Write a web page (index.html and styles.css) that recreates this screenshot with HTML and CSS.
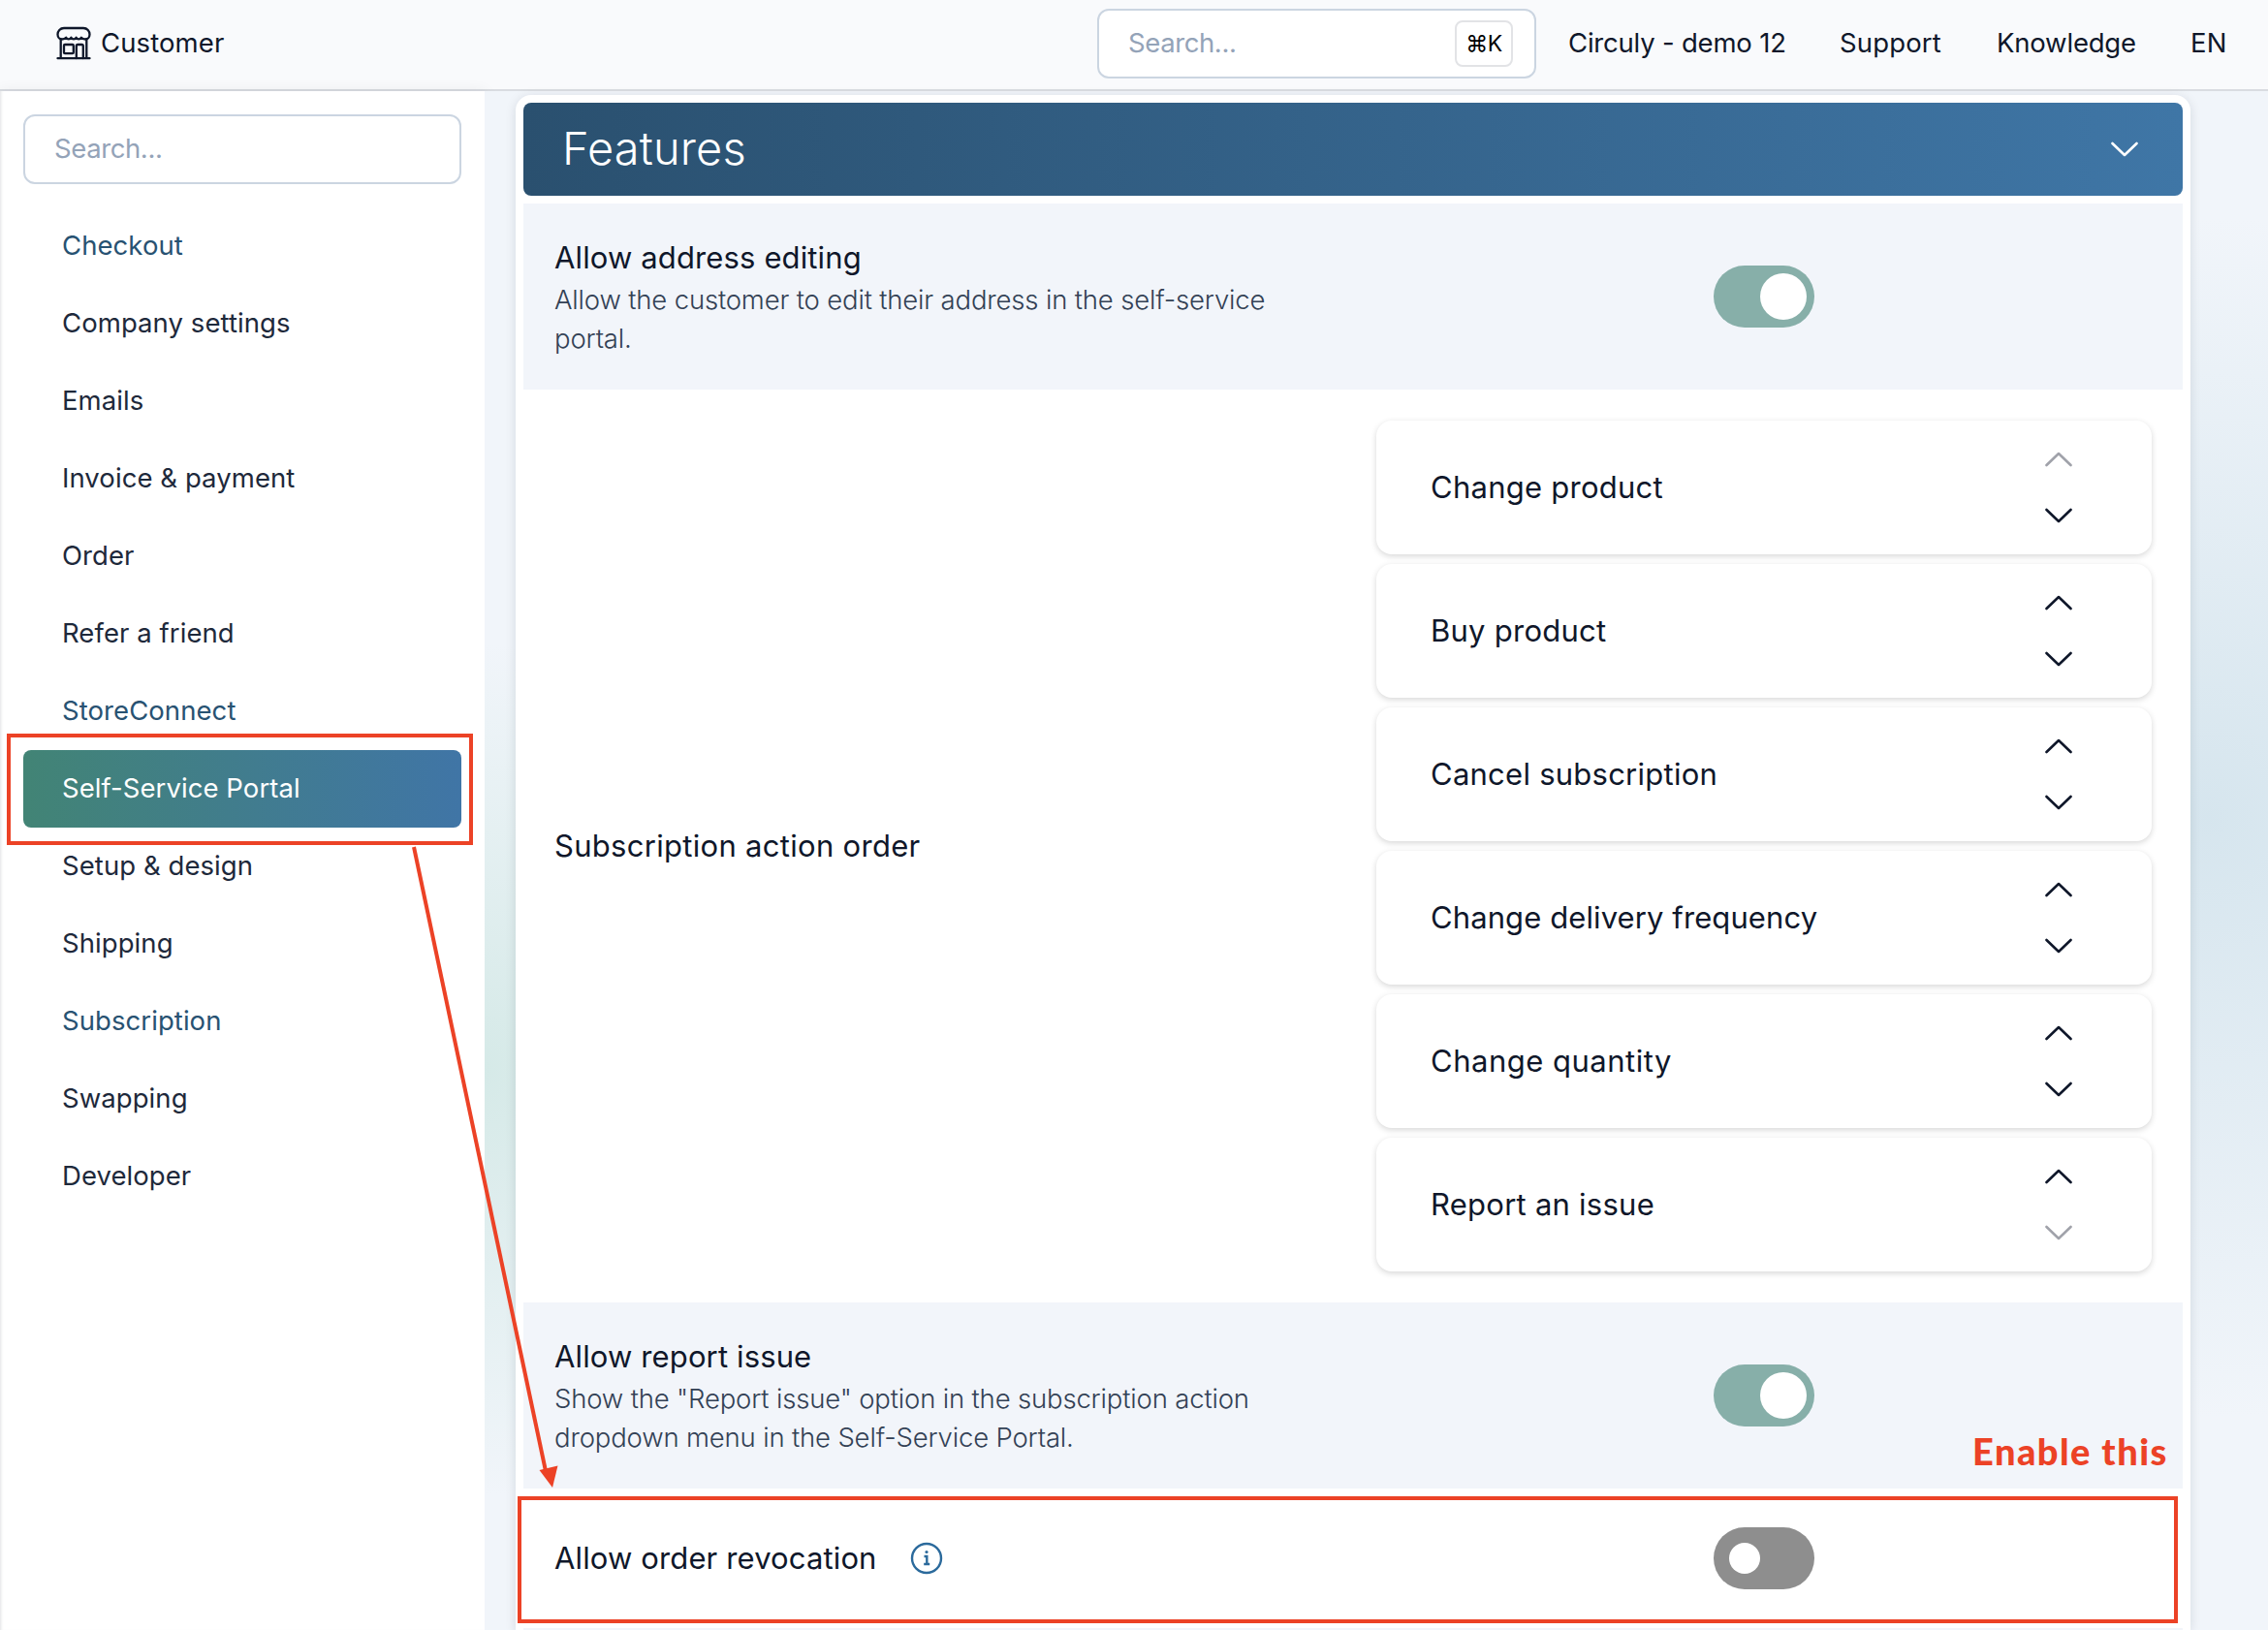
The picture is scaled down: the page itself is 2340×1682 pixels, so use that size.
FILE: index.html
```html
<!DOCTYPE html>
<html lang="en">
<head>
<meta charset="utf-8">
<title>Self-Service Portal settings</title>
<link rel="stylesheet" href="styles.css">
</head>
<body>
<header class="topbar">
  <a class="brand">
    <svg class="brand-icon" viewBox="0 0 36 36" fill="none" stroke="currentColor" stroke-width="2.3" stroke-linecap="round" stroke-linejoin="round">
      <path d="M8 2H28C32 2 34.500 5.200 34.500 8.500C34.500 11.500 32.300 13.500 30 13.500C28 13.500 26.800 13 25.800 11.800C24.800 14 21.600 14 20.600 11.800C19.600 14 16.400 14 15.400 11.800C14.400 14 11.200 14 10.200 11.800C9.200 13 8 13.500 6 13.500C3.700 13.500 1.500 11.500 1.500 8.500C1.500 5.200 4 2 8 2Z"/>
      <path d="M4.700 13.500V33M31.300 13.500V33M1.500 33.200H34.500"/>
      <rect x="8" y="19" width="9.800" height="9.200" rx="1"/>
      <path d="M20.800 33V20.500Q20.800 19 22.300 19H26.300Q27.800 19 27.800 20.500V33"/>
    </svg>
    <span class="lift">Customer</span>
  </a>
  <div class="top-search"><span class="placeholder lift">Search...</span><kbd class="shortcut">⌘K</kbd></div>
  <nav class="top-links lift">
    <a class="tight">Circuly - demo 12</a>
    <a>Support</a>
    <a class="tight">Knowledge</a>
    <a>EN</a>
  </nav>
</header>
<div class="layout">
  <aside class="sidebar">
    <div class="side-search"><span class="placeholder">Search...</span></div>
    <nav class="menu">
      <a class="item accent">Checkout</a>
      <a class="item">Company settings</a>
      <a class="item">Emails</a>
      <a class="item">Invoice &amp; payment</a>
      <a class="item">Order</a>
      <a class="item">Refer a friend</a>
      <a class="item accent">StoreConnect</a>
      <a class="item active">Self-Service Portal</a>
      <a class="item">Setup &amp; design</a>
      <a class="item">Shipping</a>
      <a class="item accent">Subscription</a>
      <a class="item">Swapping</a>
      <a class="item">Developer</a>
    </nav>
  </aside>
  <main class="content">
    <section class="panel">
      <div class="panel-head">
        <h2 class="panel-title">Features</h2>
        <svg class="chev head-chev" viewBox="0 0 28 16"><path d="M1.500 2L14 14L26.500 2"/></svg>
      </div>
      <div class="row shaded">
        <div class="copy">
          <h3 class="row-title">Allow address editing</h3>
          <p class="desc">Allow the customer to edit their address in the self-service<br>portal.</p>
        </div>
        <div class="control"><span class="toggle on"></span></div>
      </div>
      <div class="row">
        <div class="copy"><h3 class="row-title wide">Subscription action order</h3></div>
        <div class="control cards">
          <div class="card"><span class="card-name">Change product</span><span class="movers"><svg class="chev off" viewBox="0 0 28 16"><path d="M1.500 14L14 2L26.500 14"/></svg><svg class="chev" viewBox="0 0 28 16"><path d="M1.500 2L14 14L26.500 2"/></svg></span></div>
          <div class="card"><span class="card-name">Buy product</span><span class="movers"><svg class="chev" viewBox="0 0 28 16"><path d="M1.500 14L14 2L26.500 14"/></svg><svg class="chev" viewBox="0 0 28 16"><path d="M1.500 2L14 14L26.500 2"/></svg></span></div>
          <div class="card"><span class="card-name">Cancel subscription</span><span class="movers"><svg class="chev" viewBox="0 0 28 16"><path d="M1.500 14L14 2L26.500 14"/></svg><svg class="chev" viewBox="0 0 28 16"><path d="M1.500 2L14 14L26.500 2"/></svg></span></div>
          <div class="card"><span class="card-name snug">Change delivery frequency</span><span class="movers"><svg class="chev" viewBox="0 0 28 16"><path d="M1.500 14L14 2L26.500 14"/></svg><svg class="chev" viewBox="0 0 28 16"><path d="M1.500 2L14 14L26.500 2"/></svg></span></div>
          <div class="card"><span class="card-name wide">Change quantity</span><span class="movers"><svg class="chev" viewBox="0 0 28 16"><path d="M1.500 14L14 2L26.500 14"/></svg><svg class="chev" viewBox="0 0 28 16"><path d="M1.500 2L14 14L26.500 2"/></svg></span></div>
          <div class="card"><span class="card-name">Report an issue</span><span class="movers"><svg class="chev" viewBox="0 0 28 16"><path d="M1.500 14L14 2L26.500 14"/></svg><svg class="chev off" viewBox="0 0 28 16"><path d="M1.500 2L14 14L26.500 2"/></svg></span></div>
        </div>
      </div>
      <div class="row shaded">
        <div class="copy">
          <h3 class="row-title">Allow report issue</h3>
          <p class="desc">Show the "Report issue" option in the subscription action<br>dropdown menu in the Self-Service Portal.</p>
        </div>
        <div class="control"><span class="toggle on"></span></div>
      </div>
      <div class="row">
        <div class="copy with-info">
          <h3 class="row-title">Allow order revocation</h3>
          <svg class="info" viewBox="0 0 34 34" fill="none" stroke="#2b6a9c" stroke-width="2.400"><circle cx="17" cy="17" r="15"/><path d="M14.500 15H17.300V22.500M14.200 23H20.200"/><circle cx="17" cy="10.500" r="1.600" fill="#2b6a9c" stroke="none"/></svg>
        </div>
        <div class="control"><span class="toggle"></span></div>
      </div>
      <div class="next-row"></div>
    </section>
  </main>
</div>
<div class="note note-menu"></div>
<div class="note note-row"></div>
<svg class="arrow" viewBox="0 0 160 670"><path d="M7 4L143 648" stroke="#ec4226" stroke-width="4"/><path d="M136.500 647L155.500 642.500L150 665Z" fill="#ec4226"/></svg>
<span class="note-text">Enable this</span>
</body>
</html>
```
FILE: styles.css
```css
* { box-sizing: border-box; }
body {
  margin: 0;
  width: 2340px;
  height: 1682px;
  overflow: hidden;
  position: relative;
  font-family: Inter, "Liberation Sans", sans-serif;
  font-size: 27.5px;
  color: #0f172a;
  background: #f1f5fa;
}
h2, h3, p { margin: 0; font-weight: 400; }

.topbar {
  height: 94px;
  display: flex;
  align-items: center;
  padding: 0 45px 2px 58px;
  background: #f9fafc;
  border-bottom: 2px solid #d9dce1;
}
.brand { display: flex; align-items: center; gap: 10px; line-height: 40px; letter-spacing: .1px; }
.brand-icon { width: 36px; height: 36px; }
.lift { padding-bottom: 2px; }
.top-search {
  width: 453px;
  height: 72px;
  margin-left: auto;
  display: flex;
  align-items: center;
  justify-content: space-between;
  padding: 0 22px 0 30px;
  background: #fff;
  border: 2px solid #cbd5e1;
  border-radius: 12px;
}
.placeholder { color: #94a3b8; letter-spacing: -.4px; }
.shortcut {
  width: 60px;
  height: 48px;
  display: flex;
  align-items: center;
  justify-content: center;
  font: 23px Inter, "DejaVu Sans", sans-serif;
  letter-spacing: -.5px;
  color: #000;
  border: 2px solid #e2e3e6;
  border-radius: 8px;
}
.top-links {
  display: grid;
  grid-template-columns: 280px 162px 200px 35px;
  margin-left: 33px;
  line-height: 40px;
  white-space: nowrap;
  letter-spacing: .15px;
}
.tight { letter-spacing: -.2px; }

.layout { display: flex; height: 1588px; }
.sidebar {
  width: 500px;
  padding: 24px;
  background: #fff;
  box-shadow: 0 4px 16px rgba(15, 23, 42, .12), inset 3px 0 3px -2px rgba(15, 23, 42, .12);
}
.side-search {
  height: 72px;
  display: flex;
  align-items: center;
  padding: 0 0 2px 30px;
  border: 2px solid #cbd5e1;
  border-radius: 12px;
}
.menu { margin-top: 24px; }
.item {
  display: flex;
  align-items: center;
  height: 80px;
  padding: 0 0 3px 40px;
  letter-spacing: .07px;
  color: #1e293b;
  border-radius: 8px;
}
.item.accent { color: #285272; }
.item.active { color: #fff; background: linear-gradient(to right, #428475, #4075a6); }

.content {
  flex: 1;
  padding: 4px 80px 0 32px;
  background:
    radial-gradient(ellipse 320px 440px at 0 1010px, rgba(186, 222, 213, .5), rgba(186, 222, 213, 0)),
    radial-gradient(ellipse 600px 620px at 1780px 750px, rgba(196, 219, 230, .6), rgba(196, 219, 230, 0)),
    #f1f5fa;
}
.panel {
  height: 1584px;
  padding: 8px 8px 0;
  background: #fff;
  border-radius: 16px 16px 0 0;
  box-shadow: 0 2px 12px rgba(15, 23, 42, .12);
}
.panel-head {
  height: 96px;
  margin-bottom: 8px;
  padding: 0 46px 0 40px;
  display: flex;
  align-items: center;
  justify-content: space-between;
  color: #fff;
  background: linear-gradient(to right, #2a506f, #3f76a6);
  border-radius: 8px;
}
.panel-title { font-size: 47px; font-weight: 300; letter-spacing: .15px; padding-bottom: 3px; }
.chev {
  width: 28px;
  height: 16px;
  fill: none;
  stroke: currentColor;
  stroke-width: 2.6;
  stroke-linecap: round;
  stroke-linejoin: round;
}
.chev.off { color: #a0a2aa; }
.row {
  display: grid;
  grid-template-columns: 848px 800px;
  align-items: center;
  padding: 32px;
  min-height: 144px;
}
.row.shaded { background: #f2f5fa; }
.next-row { height: 2px; background: #f2f5fa; }
.row-title { font-size: 31px; line-height: 48px; letter-spacing: .13px; }
.desc { margin: -1px 0 1px; font-weight: 300; line-height: 40px; letter-spacing: -.17px; color: #334155; }
.control { display: flex; justify-content: center; }
.cards { flex-direction: column; gap: 10px; }
.card {
  height: 138px;
  display: flex;
  align-items: center;
  justify-content: space-between;
  padding: 0 82px 0 56px;
  font-size: 31px;
  border-radius: 16px;
  box-shadow: 0 2px 6px rgba(0, 0, 0, .16);
}
.card-name { padding-bottom: 2px; letter-spacing: .25px; }
.row-title.wide { letter-spacing: .3px; }
.card-name.wide { letter-spacing: .5px; }
.card-name.snug { letter-spacing: .1px; }
.movers { display: flex; flex-direction: column; gap: 42px; }
.toggle {
  display: flex;
  align-items: center;
  width: 104px;
  height: 64px;
  padding: 0 16px;
  border-radius: 32px;
  background: #8e8e8e;
}
.toggle::before { content: ""; width: 32px; height: 32px; border-radius: 50%; background: #fff; }
.toggle.on { justify-content: flex-end; padding: 0 8px; background: #87afa9; }
.toggle.on::before { width: 48px; height: 48px; }
.with-info { display: flex; align-items: center; gap: 34px; }
.info { width: 34px; height: 34px; }

.note { position: absolute; border: 4px solid #ec4226; }
.note-menu { left: 7px; top: 757px; width: 481px; height: 115px; }
.note-row { left: 534px; top: 1544px; width: 1713px; height: 131px; }
.arrow { position: absolute; left: 420px; top: 870px; width: 160px; height: 670px; }
.note-text {
  position: absolute;
  left: 2035px;
  top: 1474px;
  font: 900 38px/46px Lato, sans-serif;
  letter-spacing: 1.45px;
  color: #ec4226;
}
```
